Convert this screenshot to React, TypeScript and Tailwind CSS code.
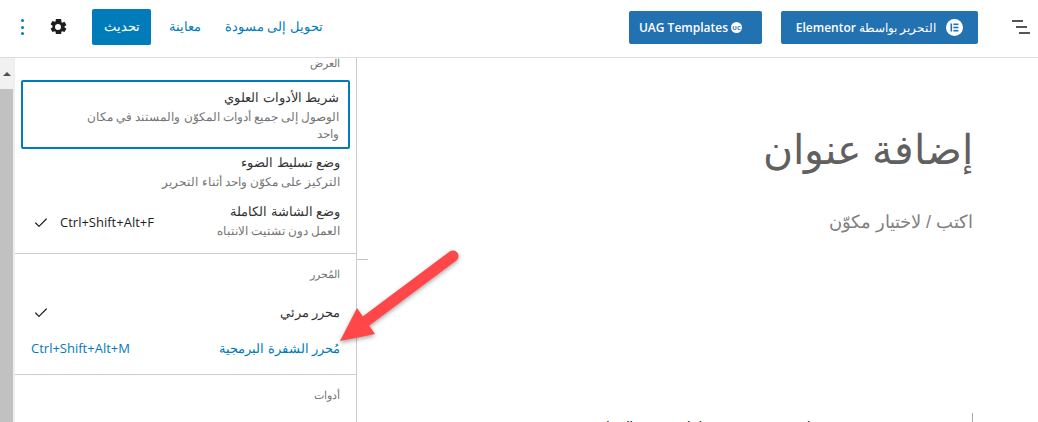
import { Check } from "lucide-react";

const sans = "font-['Open_Sans','Noto_Sans',sans-serif]";

const MenuItem = ({
  label,
  hint,
  shortcut,
  checked,
  active,
  className = "",
}: {
  label: string;
  hint?: string;
  shortcut?: string;
  checked?: boolean;
  active?: boolean;
  className?: string;
}) => (
  <div className={`flex items-center justify-between px-[16px] ${className}`}>
    <div className="min-w-0 pb-[3px]">
      <div className={`text-[13px] leading-[20px] ${active ? "text-[#007cba]" : "text-[#333333]"}`}>{label}</div>
      {hint && <div className="text-[12px] leading-[20px] text-[#757575]">{hint}</div>}
    </div>
    <div className="flex items-center">
      {shortcut && (
        <span dir="ltr" className={`text-[13px] ${active ? "text-[#007cba]" : "text-[#1e1e1e]"}`}>
          {shortcut}
        </span>
      )}
      {checked && <Check size={16} strokeWidth={1.8} className="text-[#1e1e1e] mr-[11px] ml-[2px]" />}
    </div>
  </div>
);

const GroupTitle = ({ children, className = "" }: { children: string; className?: string }) => (
  <div className={`px-[16px] text-[11px] leading-[16px] text-[#757575] ${className}`}>{children}</div>
);

const App = () => {
  return (
    <div dir="rtl" className={`relative flex h-[422px] w-[1038px] flex-col overflow-hidden bg-white ${sans}`}>
      {/* top bar */}
      <header className="flex h-[58px] shrink-0 items-center justify-between border-b border-[#dcdcdc] pr-[8px] pl-[21px]">
        <div className="flex items-center pb-[2px]">
          <svg width="18" height="15" viewBox="0 0 18 15" fill="#555555">
            <rect x="0" y="0" width="11" height="2" />
            <rect x="4" y="6" width="11" height="2" />
            <rect x="7" y="12" width="11" height="2" />
          </svg>
          <div className="mr-[34px] flex items-center gap-[19px]">
            <button className="flex h-[33px] w-[197px] items-center justify-center gap-[10px] rounded-[2px] bg-[#2271b1] text-[12px] text-white">
              <span className="flex h-[17px] w-[17px] items-center justify-center rounded-full bg-white">
                <svg width="9" height="9" viewBox="0 0 9 9" fill="#2271b1">
                  <rect x="0.5" y="0.5" width="1.6" height="8" />
                  <rect x="3.4" y="0.5" width="5" height="1.6" />
                  <rect x="3.4" y="3.7" width="5" height="1.6" />
                  <rect x="3.4" y="6.9" width="5" height="1.6" />
                </svg>
              </span>
              <span>
                التحرير بواسطة <span className="font-semibold">Elementor</span>
              </span>
            </button>
            <button className="flex h-[33px] w-[133px] items-center justify-center gap-[3px] rounded-[2px] bg-[#2271b1] pr-[10px] text-[12px] font-semibold text-white">
              <span dir="ltr" className="flex h-[11px] w-[11px] items-center justify-center rounded-full bg-white text-[6px] leading-none font-bold text-[#2271b1]">
                UC
              </span>
              <span dir="ltr">UAG Templates</span>
            </button>
          </div>
        </div>
        <div className="flex items-center pb-[3px]">
          <span className="text-[13px] text-[#007cba]">تحويل إلى مسودة</span>
          <span className="mr-[24px] text-[13px] text-[#007cba]">معاينة</span>
          <button className="mr-[18px] flex h-[36px] w-[59px] items-center justify-center rounded-[2px] bg-[#007cba] text-[13px] text-white">
            تحديث
          </button>
          <svg className="mr-[22px]" width="24" height="24" viewBox="0 0 24 24" fill="#1e1e1e">
            <path d="M18.5 12.4v-.8l1.9-1.5-1.9-3.3-2.3.9c-.2-.2-.4-.3-.7-.4L15.1 4H9.9l-.4 2.4c-.3.1-.5.2-.7.4l-2.3-.9-1.9 3.3 1.9 1.5v1.6l-1.9 1.5 1.9 3.3 2.3-.9c.2.2.4.3.7.4l.4 2.4h5.2l.4-2.4c.3-.1.5-.2.7-.4l2.3.9 1.9-3.3-1.9-1.5v-.8zM12 15a3 3 0 1 1 0-6 3 3 0 0 1 0 6z" />
          </svg>
          <div className="mr-[22px] flex flex-col gap-[3.5px]">
            <span className="h-[3px] w-[3px] rounded-full bg-[#007cba]" />
            <span className="h-[3px] w-[3px] rounded-full bg-[#007cba]" />
            <span className="h-[3px] w-[3px] rounded-full bg-[#007cba]" />
          </div>
        </div>
      </header>

      <div className="flex min-h-0 flex-1">
        {/* post title area */}
        <main className="relative min-w-0 flex-1 pt-[62px] pr-[65px] font-['Liberation_Sans',sans-serif]">
          <h1 className="text-[41px] leading-[60px] font-normal text-[#606060]">إضافة عنوان</h1>
          <p className="mt-[30px] text-[18px] leading-[24px] text-[#808080]">اكتب / لاختيار مكوّن</p>
          <div dir="ltr" className="mt-[179px] h-[20px] w-[401px] border-r border-[#a7aaad] pt-[4px] text-[15px] leading-[20px] whitespace-nowrap text-[#1e1e1e]">
            Mauris dit amet elaborate at amet sit amet, consectetur
          </div>
          <span className="absolute top-[201px] left-0 h-px w-[11px] bg-[#c4c4c4]" />
        </main>

        {/* options menu */}
        <aside className="flex w-[342px] shrink-0 flex-col border-r border-[#cccccc]">
          <GroupTitle className="-mt-[3px]">العرض</GroupTitle>
          <div className="mx-[6px] mt-[9px] rounded-[2px] border-2 border-[#007cba] px-[9px] py-[5px]">
            <div className="text-[13px] leading-[21px] text-[#333333]">شريط الأدوات العلوي</div>
            <div className="max-w-[260px] text-[12px] leading-[17px] text-[#757575]">الوصول إلى جميع أدوات المكوّن والمستند في مكان واحد</div>
          </div>
          <MenuItem className="h-[49px]" label="وضع تسليط الضوء" hint="التركيز على مكوّن واحد أثناء التحرير" />
          <MenuItem className="h-[49px]" label="وضع الشاشة الكاملة" hint="العمل دون تشتيت الانتباه" shortcut="Ctrl+Shift+Alt+F" checked />
          <div className="mt-[6px] border-t border-[#cccccc]" />
          <GroupTitle className="mt-[12px]">المُحرر</GroupTitle>
          <MenuItem className="mt-[13px] h-[36px]" label="محرر مرئي" checked />
          <MenuItem className="h-[36px]" label="مُحرر الشفرة البرمجية" shortcut="Ctrl+Shift+Alt+M" active />
          <div className="mt-[7px] border-t border-[#cccccc]" />
          <GroupTitle className="mt-[12px]">أدوات</GroupTitle>
        </aside>

        {/* scrollbar */}
        <div className="flex w-[15px] shrink-0 flex-col border-r-2 border-[#efefef] bg-[#f1f1f1]">
          <div className="flex h-[31px] items-center justify-center">
            <span className="border-x-[4px] border-b-[4px] border-x-transparent border-b-[#505050]" />
          </div>
          <div className="flex-1 bg-[#c1c1c1]" />
        </div>
      </div>

      {/* annotation arrow */}
      <svg className="absolute top-[245px] left-[335px] drop-shadow-[0_2px_2px_rgba(0,0,0,0.35)]" width="130" height="105" viewBox="0 0 130 105" fill="none">
        <path d="M118 11 L31 76" stroke="#ff4648" strokeWidth="11" strokeLinecap="round" />
        <path d="M5 96 L22 63 L40 89 Z" fill="#ff4648" />
      </svg>
    </div>
  );
};

export default App;
